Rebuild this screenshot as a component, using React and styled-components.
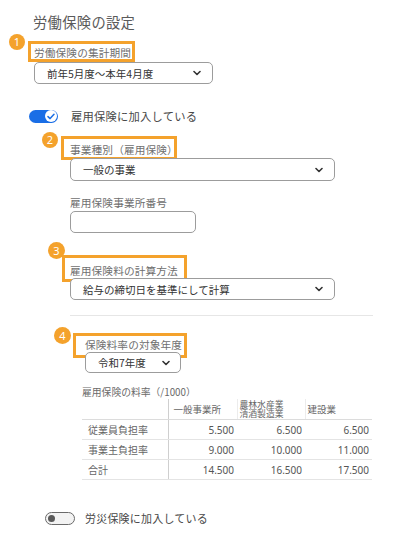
import React from "react";
import styled, { createGlobalStyle } from "styled-components";

const Global = createGlobalStyle`
  html, body { margin: 0; padding: 0; background: #fff; }
  body { font-family: "Noto Sans CJK JP", "Noto Sans", sans-serif; color: #444; }
`;

const ORANGE = "#f4a22c";

const Page = styled.div`
  width: 413px;
  height: 540px;
  overflow: hidden;
  display: flex;
  flex-direction: column;
`;

const Title = styled.h1`
  margin: 0 0 0 33px;
  height: 42px;
  display: flex;
  align-items: center;
  font-size: 14.3px;
  font-weight: 400;
  color: #5a5a5a;
  letter-spacing: 0.3px;
`;

const Group = styled.div`
  margin-left: ${(p) => p.$left}px;
  margin-top: ${(p) => p.$top || 0}px;
  display: flex;
  flex-direction: column;
  align-items: flex-start;
`;

const LabelWrap = styled.div`
  position: relative;
  height: ${(p) => p.$h}px;
  display: flex;
  align-items: center;
`;

const LabelText = styled.span`
  font-size: 10.7px;
  color: #6f6f6f;
  white-space: nowrap;
  letter-spacing: 0.1px;
`;

const HighlightBox = styled.span`
  position: absolute;
  box-sizing: border-box;
  border: 3px solid ${ORANGE};
  pointer-events: none;
`;

const Badge = styled.span`
  position: absolute;
  width: ${(p) => p.$size}px;
  height: ${(p) => p.$size}px;
  border-radius: 50%;
  background: ${ORANGE};
  color: #fff;
  font-family: "Noto Sans", sans-serif;
  font-size: 11px;
  line-height: ${(p) => p.$size}px;
  text-align: center;
`;

const SelectBox = styled.div`
  box-sizing: border-box;
  width: ${(p) => p.$w}px;
  height: ${(p) => p.$h || 22}px;
  border: 1px solid #9c9c9c;
  border-radius: 5px;
  background: #fff;
  display: flex;
  align-items: center;
  justify-content: space-between;
  padding: 0 ${(p) => p.$pr || 11}px 0 ${(p) => p.$pl || 12}px;
  font-size: 10.5px;
  color: #333;
  position: relative;
`;

const Input = styled.div`
  box-sizing: border-box;
  width: 126px;
  height: 22px;
  border: 1px solid #9c9c9c;
  border-radius: 5px;
  background: #fff;
`;

const Chevron = () => (
  <svg width="8" height="6" viewBox="0 0 8 6">
    <path d="M1 1.5 L4 4.5 L7 1.5" fill="none" stroke="#333" strokeWidth="1.6" strokeLinecap="round" strokeLinejoin="round" />
  </svg>
);

const ToggleRow = styled.div`
  margin-left: ${(p) => p.$left}px;
  margin-top: ${(p) => p.$top}px;
  height: 24px;
  display: flex;
  align-items: center;
  gap: ${(p) => p.$gap}px;
`;

const ToggleText = styled.span`
  font-size: ${(p) => p.$size || 11.3}px;
  color: #484848;
  letter-spacing: 0.2px;
`;

const SwitchOn = styled.span`
  box-sizing: border-box;
  width: 29px;
  height: 13px;
  border-radius: 7px;
  background: #1a6ee6;
  display: flex;
  align-items: center;
  justify-content: flex-end;
  padding-right: 1px;
`;

const KnobOn = styled.span`
  width: 12px;
  height: 12px;
  border-radius: 50%;
  background: #fff;
  display: flex;
  align-items: center;
  justify-content: center;
`;

const SwitchOff = styled.span`
  box-sizing: border-box;
  width: 30px;
  height: 13px;
  border-radius: 7px;
  border: 1.5px solid #6a6a6a;
  background: #f3f3f3;
  display: flex;
  align-items: center;
  padding-left: 2px;
`;

const KnobOff = styled.span`
  width: 7px;
  height: 7px;
  border-radius: 50%;
  background: #5a5a5a;
`;

const Divider = styled.hr`
  margin: 15px 0 0 70px;
  width: 303px;
  border: none;
  border-top: 1px solid #e6e6e6;
  height: 0;
`;

const Caption = styled.div`
  margin: 12px 0 0 82px;
  height: 14px;
  line-height: 14px;
  font-size: 9.8px;
  color: #6a6a6a;
`;

const Table = styled.table`
  margin-left: 82px;
  border-collapse: collapse;
  table-layout: fixed;
  width: 290px;
  font-size: 10px;
  color: #666;
`;

const HeadCell = styled.th`
  font-weight: 400;
  text-align: left;
  height: 20px;
  padding: 0 0 0 ${(p) => p.$pl || 2}px;
  line-height: ${(p) => (p.$two ? 9.5 : 12)}px;
  font-size: ${(p) => (p.$two ? 8.8 : 9.5)}px;
  border-bottom: 1px solid #dcdcdc;
  border-left: ${(p) => (p.$strong ? "1px solid #cfcfcf" : p.$light ? "1px solid #ececec" : "none")};
  vertical-align: middle;
`;

const HeadLine = styled.span`
  display: block;
  height: 9.5px;
  overflow: visible;
  white-space: nowrap;
`;

const RowHead = styled.td`
  height: 19px;
  padding: 0 0 0 6px;
  text-align: left;
  border-bottom: 1px solid #e4e4e4;
`;

const Num = styled.td`
  height: 19px;
  padding: 0 3px 0 0;
  text-align: right;
  font-family: "Noto Sans", sans-serif;
  font-size: 10px;
  color: #555;
  border-bottom: 1px solid #e4e4e4;
  border-left: ${(p) => (p.$strong ? "1px solid #cfcfcf" : "none")};
`;

function Annotated({ n, h, box, badge, children }) {
  return (
    <LabelWrap $h={h}>
      <LabelText>{children}</LabelText>
      <HighlightBox style={{ left: box[0], top: box[1], width: box[2], height: box[3] }} />
      <Badge $size={badge[2]} style={{ left: badge[0], top: badge[1] }}>
        {n}
      </Badge>
    </LabelWrap>
  );
}

const rows = [
  ["従業員負担率", "5.500", "6.500", "6.500"],
  ["事業主負担率", "9.000", "10.000", "11.000"],
  ["合計", "14.500", "16.500", "17.500"],
];

export default function App() {
  return (
    <Page>
      <Global />
      <Title>労働保険の設定</Title>

      <Group $left={34}>
        <Annotated n="1" h={20} box={[-6, -1, 107, 21]} badge={[-25, -8, 16]}>
          労働保険の集計期間
        </Annotated>
        <SelectBox $w={179}>
          <span>前年5月度〜本年4月度</span>
          <Chevron />
        </SelectBox>
      </Group>

      <ToggleRow $left={29} $top={20} $gap={13}>
        <SwitchOn>
          <KnobOn>
            <svg width="8" height="7" viewBox="0 0 8 7">
              <path d="M1 3.6 L3.1 5.6 L7 1.2" fill="none" stroke="#1a6ee6" strokeWidth="1.5" strokeLinecap="round" strokeLinejoin="round" />
            </svg>
          </KnobOn>
        </SwitchOn>
        <ToggleText>雇用保険に加入している</ToggleText>
      </ToggleRow>

      <Group $left={70} $top={12}>
        <Annotated n="2" h={18} box={[-9, -4, 116, 24]} badge={[-28, -8, 16]}>
          事業種別（雇用保険）
        </Annotated>
        <SelectBox $w={265} $h={23}>
          <span>一般の事業</span>
          <Chevron />
        </SelectBox>
      </Group>

      <Group $left={70} $top={12}>
        <LabelWrap $h={18}>
          <LabelText>雇用保険事業所番号</LabelText>
        </LabelWrap>
        <Input />
      </Group>

      <Group $left={70} $top={29}>
        <Annotated n="3" h={16} box={[-8, -7, 125, 27]} badge={[-22, -20, 17]}>
          雇用保険料の計算方法
        </Annotated>
        <SelectBox $w={265}>
          <span>給与の締切日を基準にして計算</span>
          <Chevron />
        </SelectBox>
      </Group>

      <Divider />

      <Group $left={85} $top={20}>
        <Annotated n="4" h={16} box={[-12, -3, 114, 25]} badge={[-31, -9, 17]}>
          保険料率の対象年度
        </Annotated>
        <SelectBox $w={96} $h={21} $pl={12} $pr={10}>
          <span>令和7年度</span>
          <Chevron />
        </SelectBox>
      </Group>

      <Caption>雇用保険の料率（/1000）</Caption>
      <Table>
        <colgroup>
          <col style={{ width: 86 }} />
          <col style={{ width: 69 }} />
          <col style={{ width: 68 }} />
          <col style={{ width: 67 }} />
        </colgroup>
        <thead>
          <tr>
            <HeadCell />
            <HeadCell $strong $pl={5}>一般事業所</HeadCell>
            <HeadCell $light $two $pl={2}>
              <HeadLine>農林水産業</HeadLine>
              <HeadLine>清酒製造業</HeadLine>
            </HeadCell>
            <HeadCell $light $pl={2}>建設業</HeadCell>
          </tr>
        </thead>
        <tbody>
          {rows.map((r) => (
            <tr key={r[0]}>
              <RowHead>{r[0]}</RowHead>
              <Num $strong>{r[1]}</Num>
              <Num>{r[2]}</Num>
              <Num>{r[3]}</Num>
            </tr>
          ))}
        </tbody>
      </Table>

      <ToggleRow $left={45} $top={26} $gap={10}>
        <SwitchOff>
          <KnobOff />
        </SwitchOff>
        <ToggleText $size={11}>労災保険に加入している</ToggleText>
      </ToggleRow>
    </Page>
  );
}
